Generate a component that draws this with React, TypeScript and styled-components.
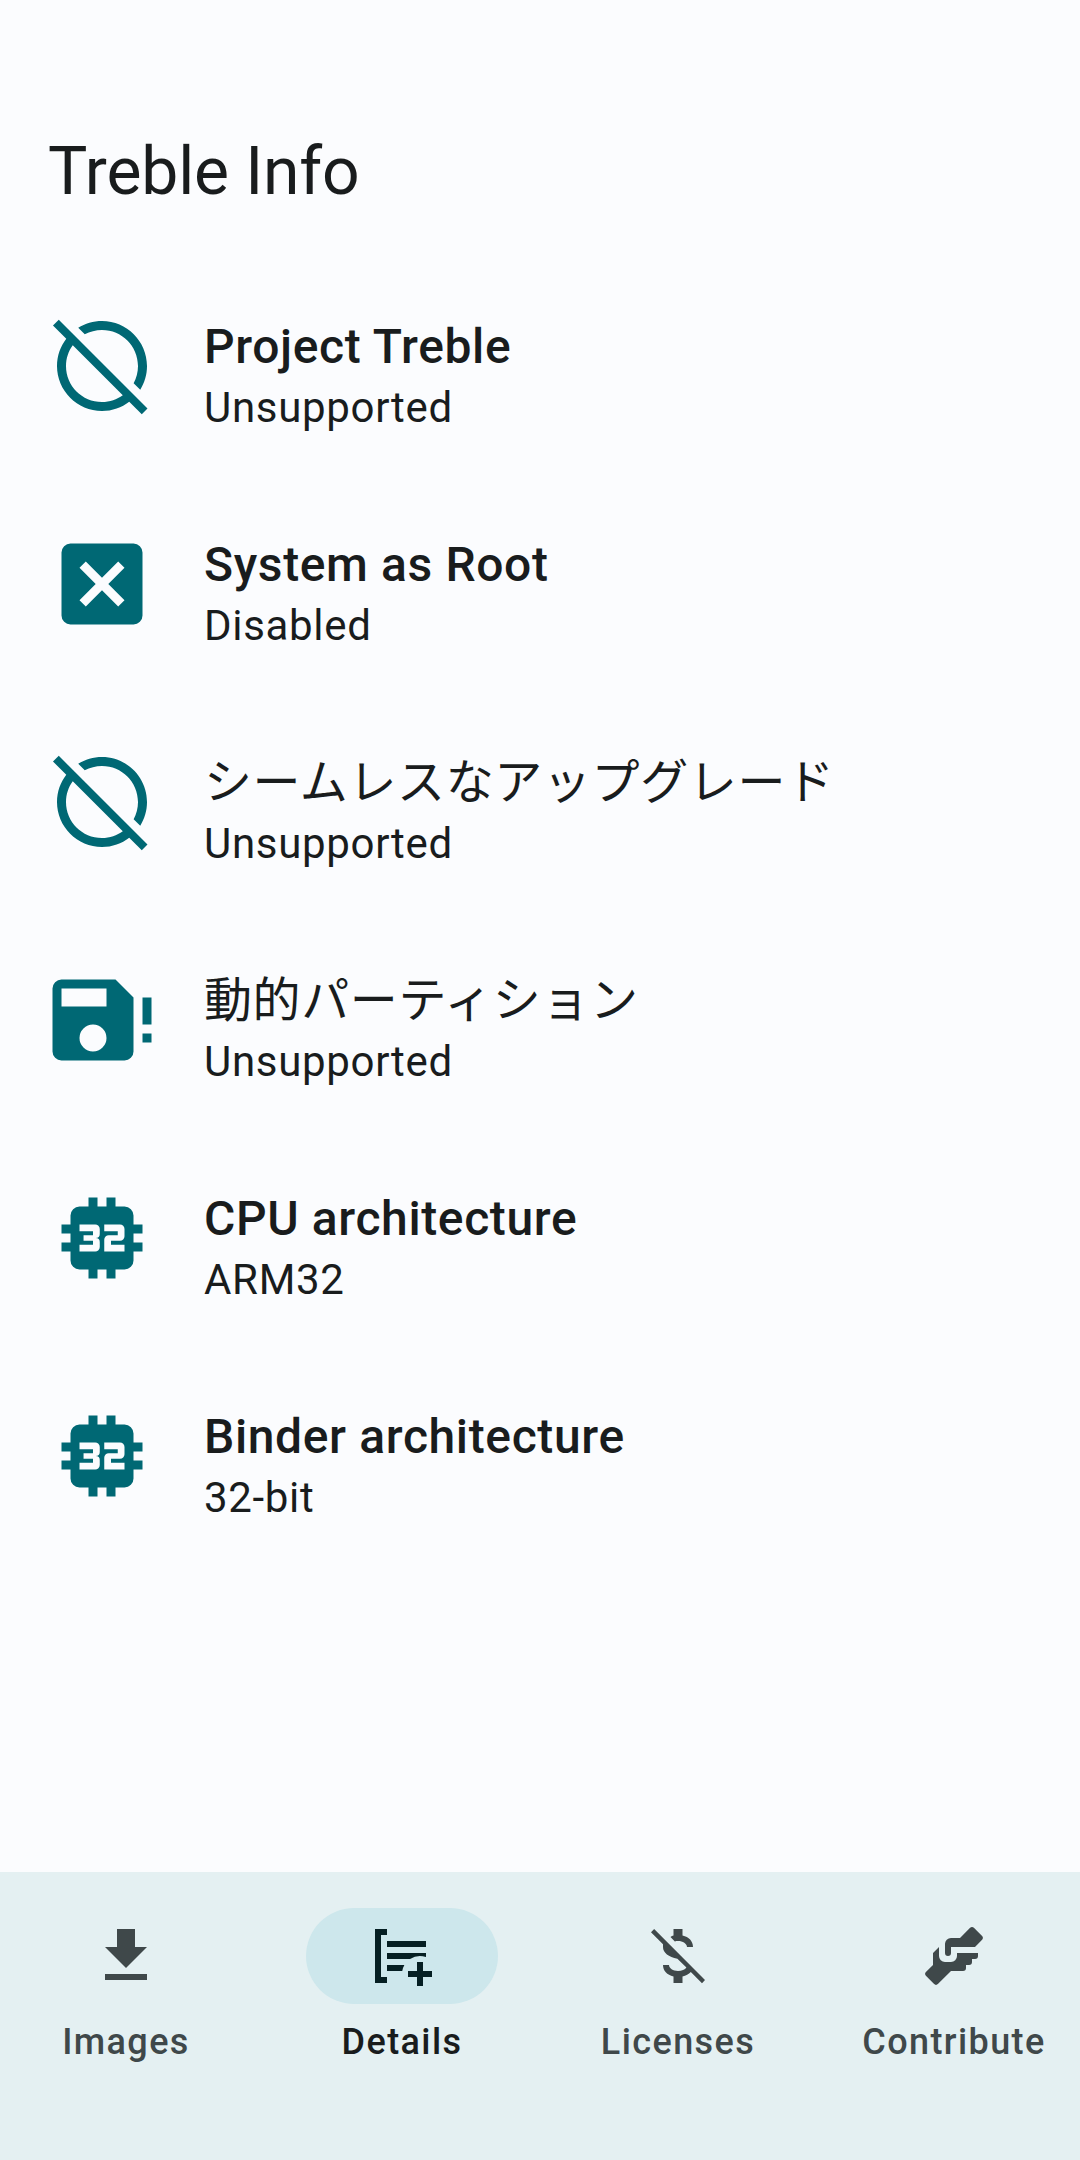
import React from "react";
import styled, { createGlobalStyle } from "styled-components";

const color = {
  surface: "#fbfcfe",
  text: "#191c1d",
  primary: "#006874",
  bar: "#e4f0f2",
  pill: "#cde7ec",
  onPill: "#051f23",
  muted: "#3f484a",
};

const GlobalStyle = createGlobalStyle`
  html, body { margin: 0; padding: 0; }
  body {
    background: ${color.surface};
    color: ${color.text};
    font-family: Roboto, "Noto Sans CJK JP", sans-serif;
  }
`;

const Screen = styled.div`
  display: flex;
  flex-direction: column;
  width: 1080px;
  height: 2160px;
  overflow: hidden;
  background: ${color.surface};
`;

const Header = styled.header`
  padding: 133px 48px 0;
`;

const Title = styled.h1`
  margin: 0;
  font-size: 66px;
  line-height: 78px;
  font-weight: 400;
  letter-spacing: -0.15px;
`;

const List = styled.ul`
  flex: 1;
  display: flex;
  flex-direction: column;
  margin: 0;
  padding: 47px 0 0;
  list-style: none;
`;

const Row = styled.li`
  display: flex;
  align-items: flex-start;
  gap: 48px;
  height: 164px;
  padding: 54px 48px 0;
`;

const Icon = styled.svg<{ $size: number }>`
  flex: none;
  display: block;
  width: ${(p) => p.$size}px;
  height: ${(p) => p.$size}px;
  fill: currentColor;
`;

const RowIcon = styled.span`
  display: flex;
  color: ${color.primary};
`;

const RowText = styled.div`
  display: flex;
  flex-direction: column;
  padding-top: 6px;
`;

const RowTitle = styled.span`
  font-size: 48px;
  line-height: 57px;
  height: 57px;
  font-weight: 500;
  letter-spacing: 0.62px;
  white-space: nowrap;

  &:lang(ja) {
    font-weight: 400;
  }
`;

const RowValue = styled.span`
  margin-top: 8px;
  font-size: 42px;
  line-height: 50px;
  letter-spacing: 0.68px;
`;

const NavBar = styled.nav`
  display: grid;
  grid-template-columns: repeat(4, 252px);
  column-gap: 24px;
  height: 252px;
  padding-top: 36px;
  background: ${color.bar};
`;

const NavItem = styled.a<{ $active: boolean }>`
  display: flex;
  flex-direction: column;
  align-items: center;
  color: ${(p) => (p.$active ? color.text : color.muted)};
`;

const Pill = styled.span<{ $active: boolean }>`
  display: flex;
  align-items: center;
  justify-content: center;
  width: 192px;
  height: 96px;
  border-radius: 48px;
  background: ${(p) => (p.$active ? color.pill : "transparent")};
  color: ${(p) => (p.$active ? color.onPill : color.muted)};
`;

const NavLabel = styled.span`
  margin-top: 17px;
  font-size: 36px;
  line-height: 42px;
  font-weight: 500;
  letter-spacing: 1.4px;
  white-space: nowrap;
`;

const paths = {
  circleOff:
    "M22.11 21.46L2.39 1.73L1.11 3L4.06 5.95C2.78 7.63 2 9.72 2 12C2 17.5 6.5 22 12 22C14.28 22 16.37 21.23 18.05 19.94L20.84 22.73L22.11 21.46M12 20C7.58 20 4 16.42 4 12C4 10.27 4.56 8.68 5.5 7.38L16.62 18.5C15.32 19.45 13.73 20 12 20M8.17 4.97L6.72 3.5C8.25 2.56 10.06 2 12 2C17.5 2 22 6.5 22 12C22 13.94 21.44 15.75 20.5 17.28L19.03 15.83C19.65 14.69 20 13.39 20 12C20 7.58 16.42 4 12 4C10.61 4 9.31 4.35 8.17 4.97Z",
  closeBox:
    "M19 3H5A2 2 0 0 0 3 5V19A2 2 0 0 0 5 21H19A2 2 0 0 0 21 19V5A2 2 0 0 0 19 3M15.6 17L12 13.4L8.4 17L7 15.6L10.6 12L7 8.4L8.4 7L12 10.6L15.6 7L17 8.4L13.4 12L17 15.6L15.6 17Z",
  saveAlert:
    "M15 3H3A2 2 0 0 0 1 5V19A2 2 0 0 0 3 21H17A2 2 0 0 0 19 19V7L15 3M3 5H13V9H3V5M10 19A3 3 0 1 1 10 13A3 3 0 0 1 10 19M21 7H23V13H21V7M21 15H23V17H21V15Z",
  chip32:
    "M9 3V5H7A2 2 0 0 0 5 7V9H3V11H5V13H3V15H5V17A2 2 0 0 0 7 19H9V21H11V19H13V21H15V19H17A2 2 0 0 0 19 17V15H21V13H19V11H21V9H19V7A2 2 0 0 0 17 5H15V3H13V5H11V3H9M7 9H10.5A1 1 0 0 1 11.5 10V11.1A.9 .9 0 0 1 10.6 12A.9 .9 0 0 1 11.5 12.9V14A1 1 0 0 1 10.5 15H7V13.5H10V12.6H7.9V11.4H10V10.5H7V9M12.5 9H16A1 1 0 0 1 17 10V11.6A1 1 0 0 1 16 12.6H14V13.5H17V15H12.5V12.4A1 1 0 0 1 13.5 11.4H15.5V10.5H12.5V9Z",
  download: "M5 20H19V18H5V20M19 9H15V3H9V9H5L12 16L19 9Z",
  details:
    "M3 3H7V5H5V19H7V21H3V3M7 7H20V9H7V7M7 11H20V12.34A6 6 0 0 0 14.68 13H7V11M7 15H12.8A6 6 0 0 0 12.08 17H7V15M17 14H19V17H22V19H19V22H17V19H14V17H17V14Z",
  usdOff:
    "M10.5 5.2V3H13.5V5.2C15.65 5.66 17 7.13 17 9H15C15 7.92 13.63 7 12 7C11.63 7 11.28 7.05 10.95 7.13L9.5 5.68C9.8 5.48 10.15 5.3 10.5 5.2M4.05 3L21 20L20 21.05L16.27 17.32C15.58 18.03 14.63 18.56 13.5 18.8V21H10.5V18.8C8.35 18.34 7 16.87 7 15H9C9 16.08 10.37 17 12 17C13.25 17 14.35 16.5 14.8 15.82L11.8 12.88C8.9 12.3 7 11 7 9V8.05L3 4.05L4.05 3Z",
  handshake:
    "M11 6H14L17.29 2.7A1 1 0 0 1 18.71 2.7L21.29 5.29A1 1 0 0 1 21.29 6.7L19 9H11V11A1 1 0 0 1 10 12A1 1 0 0 1 9 11V8A2 2 0 0 1 11 6M5 11V15L2.71 17.29A1 1 0 0 0 2.71 18.7L5.29 21.29A1 1 0 0 0 6.71 21.29L11 17H15A1 1 0 0 0 16 16V15H17A1 1 0 0 0 18 14V13H19A1 1 0 0 0 20 12V11H13V12A2 2 0 0 1 11 14H9A2 2 0 0 1 7 12V9L5 11Z",
};

type IconName = keyof typeof paths;

const Glyph = ({ name, size }: { name: IconName; size: number }) => (
  <Icon $size={size} viewBox="0 0 24 24" aria-hidden="true">
    <path fillRule="evenodd" d={paths[name]} />
  </Icon>
);

const rows: { icon: IconName; title: string; value: string; lang?: string }[] = [
  { icon: "circleOff", title: "Project Treble", value: "Unsupported" },
  { icon: "closeBox", title: "System as Root", value: "Disabled" },
  { icon: "circleOff", title: "シームレスなアップグレード", value: "Unsupported", lang: "ja" },
  { icon: "saveAlert", title: "動的パーティション", value: "Unsupported", lang: "ja" },
  { icon: "chip32", title: "CPU architecture", value: "ARM32" },
  { icon: "chip32", title: "Binder architecture", value: "32-bit" },
];

const tabs: { icon: IconName; label: string; active?: boolean }[] = [
  { icon: "download", label: "Images" },
  { icon: "details", label: "Details", active: true },
  { icon: "usdOff", label: "Licenses" },
  { icon: "handshake", label: "Contribute" },
];

export default function App() {
  return (
    <Screen>
      <GlobalStyle />
      <Header>
        <Title>Treble Info</Title>
      </Header>
      <List>
        {rows.map((row) => (
          <Row key={row.title}>
            <RowIcon>
              <Glyph name={row.icon} size={108} />
            </RowIcon>
            <RowText>
              <RowTitle lang={row.lang}>{row.title}</RowTitle>
              <RowValue>{row.value}</RowValue>
            </RowText>
          </Row>
        ))}
      </List>
      <NavBar>
        {tabs.map((tab) => (
          <NavItem key={tab.label} $active={!!tab.active}>
            <Pill $active={!!tab.active}>
              <Glyph name={tab.icon} size={72} />
            </Pill>
            <NavLabel>{tab.label}</NavLabel>
          </NavItem>
        ))}
      </NavBar>
    </Screen>
  );
}
